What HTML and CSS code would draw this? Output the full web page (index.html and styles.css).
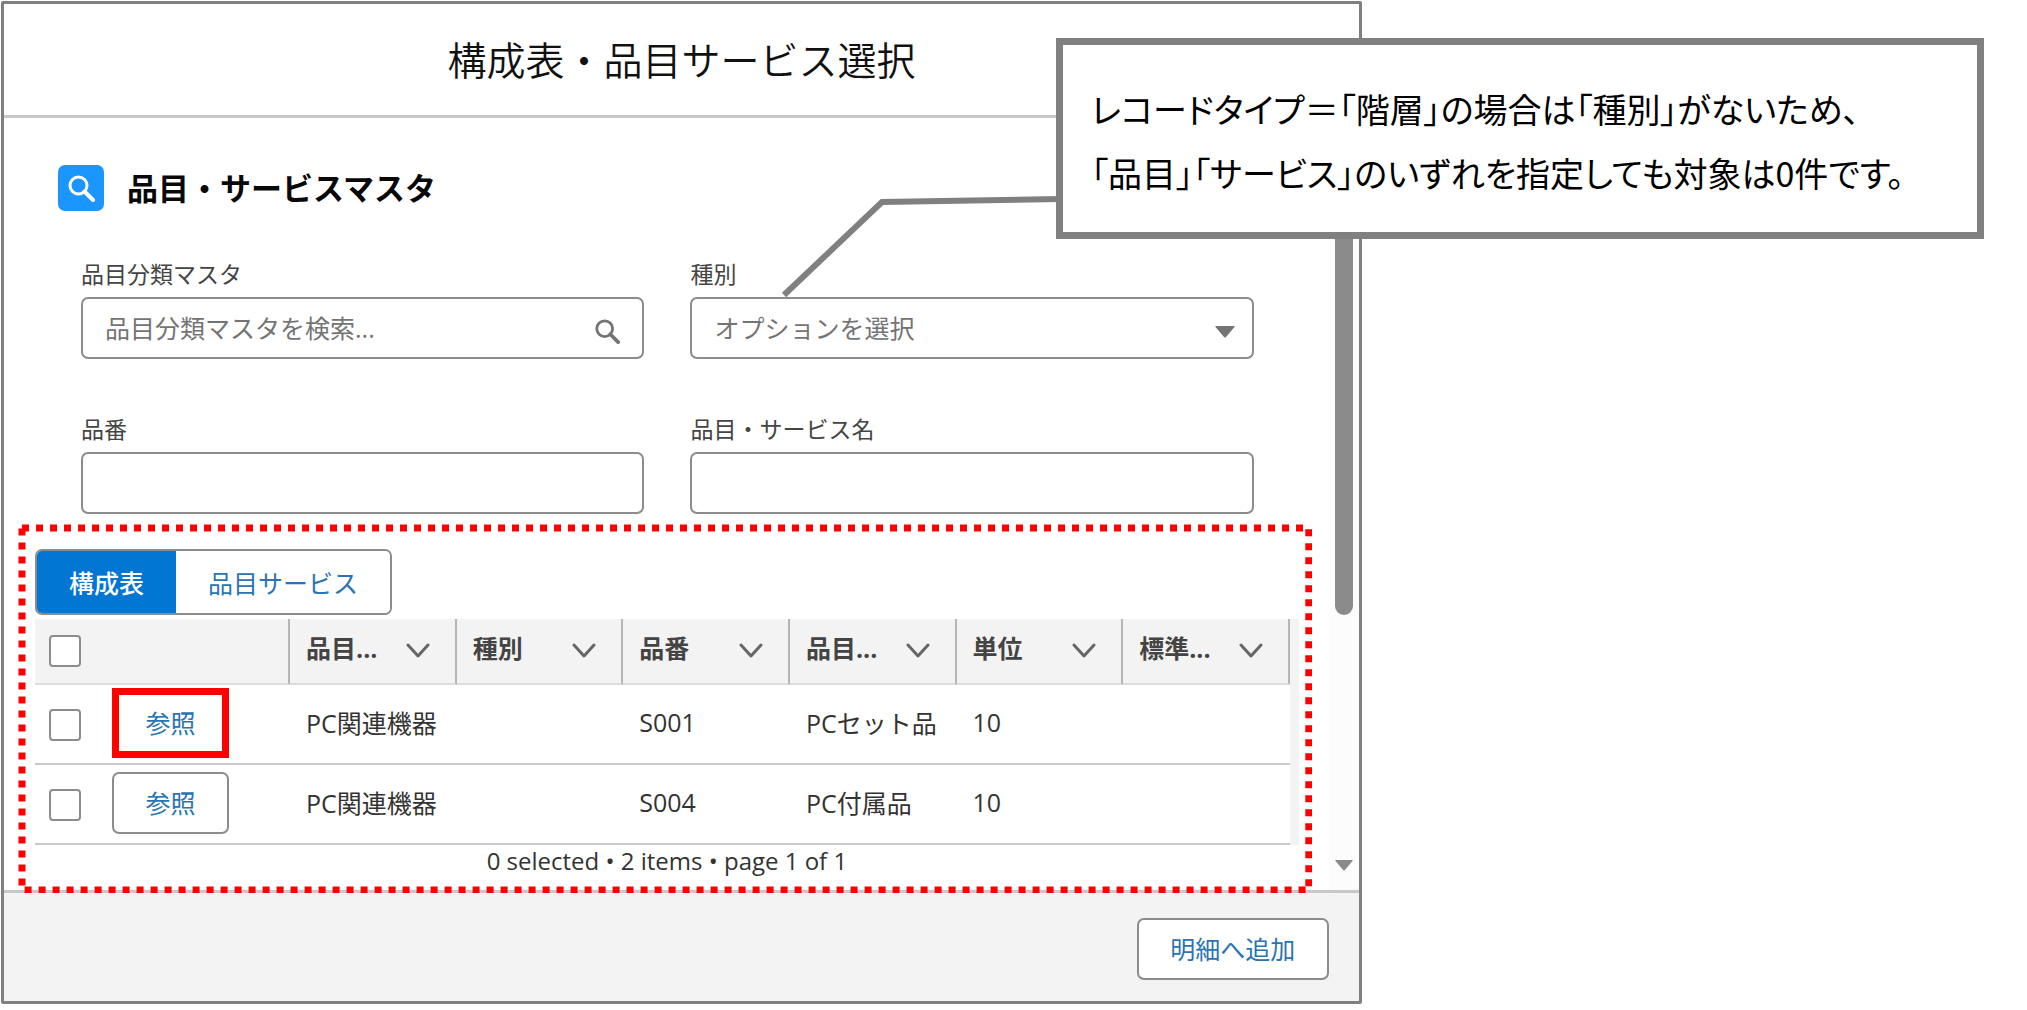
FILE: index.html
```html
<!DOCTYPE html>
<html lang="ja">
<head>
<meta charset="utf-8">
<title>構成表・品目サービス選択</title>
<link rel="stylesheet" href="styles.css">
</head>
<body>
<svg class="defs" aria-hidden="true">
  <symbol id="chevron" viewBox="0 0 24 16"><path d="M2 2 L12 13 L22 2" fill="none" stroke="currentColor" stroke-width="3" stroke-linecap="round" stroke-linejoin="round"/></symbol>
  <symbol id="search" viewBox="0 0 28 28"><circle cx="11.500" cy="11.500" r="8.500" fill="none" stroke="currentColor" stroke-width="3"/><path d="M17.500 17.500 L26 26" stroke="currentColor" stroke-width="4" stroke-linecap="round"/></symbol>
  <symbol id="down" viewBox="0 0 20 12"><path d="M1 0 H19 Q20 0 19.500 1 L11 11 Q10 12 9 11 L0.500 1 Q0 0 1 0 Z" fill="currentColor"/></symbol>
</svg>
<main class="page">
  <section class="modal" role="dialog" aria-labelledby="dialog-title">
    <header class="modal-header"><h1 id="dialog-title">構成表・品目サービス選択</h1></header>
    <div class="modal-body">
      <div class="content">
        <div class="heading">
          <span class="heading-icon"><svg><use href="#search"/></svg></span>
          <h2>品目・サービスマスタ</h2>
        </div>
        <form class="fields">
          <div class="field">
            <label for="category">品目分類マスタ</label>
            <div class="control">
              <input id="category" type="text" placeholder="品目分類マスタを検索...">
              <svg class="search-icon"><use href="#search"/></svg>
            </div>
          </div>
          <div class="field">
            <label for="kind">種別</label>
            <div class="control">
              <select id="kind"><option>オプションを選択</option></select>
              <svg class="down-icon"><use href="#down"/></svg>
            </div>
          </div>
          <div class="field">
            <label for="number">品番</label>
            <div class="control"><input id="number" type="text"></div>
          </div>
          <div class="field">
            <label for="name">品目・サービス名</label>
            <div class="control"><input id="name" type="text"></div>
          </div>
        </form>
        <div class="results">
          <svg class="dashes" aria-hidden="true"><rect/></svg>
          <div class="tabs">
            <button type="button" class="tab tab-active">構成表</button>
            <button type="button" class="tab">品目サービス</button>
          </div>
          <div class="table-wrap">
            <table>
              <colgroup><col class="col-check"><col class="col-action"><col><col><col><col><col><col></colgroup>
              <thead>
                <tr>
                  <th class="plain"><input type="checkbox" aria-label="すべて選択"></th>
                  <th></th>
                  <th><div class="th"><span>品目...</span><svg><use href="#chevron"/></svg></div></th>
                  <th><div class="th"><span>種別</span><svg><use href="#chevron"/></svg></div></th>
                  <th><div class="th"><span>品番</span><svg><use href="#chevron"/></svg></div></th>
                  <th><div class="th"><span>品目...</span><svg><use href="#chevron"/></svg></div></th>
                  <th><div class="th"><span>単位</span><svg><use href="#chevron"/></svg></div></th>
                  <th><div class="th"><span>標準...</span><svg><use href="#chevron"/></svg></div></th>
                </tr>
              </thead>
              <tbody>
                <tr>
                  <td><input type="checkbox" aria-label="S001を選択"></td>
                  <td class="action"><button type="button" class="button marked">参照</button></td>
                  <td>PC関連機器</td><td></td><td>S001</td><td>PCセット品</td><td>10</td><td></td>
                </tr>
                <tr>
                  <td><input type="checkbox" aria-label="S004を選択"></td>
                  <td class="action"><button type="button" class="button">参照</button></td>
                  <td>PC関連機器</td><td></td><td>S004</td><td>PC付属品</td><td>10</td><td></td>
                </tr>
              </tbody>
            </table>
          </div>
          <p class="status">0 selected • 2 items • page 1 of 1</p>
        </div>
      </div>
      <div class="scrollbar" aria-hidden="true">
        <div class="thumb"></div>
        <svg><use href="#down"/></svg>
      </div>
    </div>
    <footer class="modal-footer"><button type="button" class="button add">明細へ追加</button></footer>
  </section>
  <svg class="leader" viewBox="0 0 280 104" aria-hidden="true"><path d="M4 101 L102 8 L280 5" fill="none" stroke="#808080" stroke-width="6"/></svg>
  <aside class="callout">
    <p>レコードタイプ＝「階層」の場合は「種別」がないため、</p>
    <p>「品目」「サービス」のいずれを指定しても対象は0件です。</p>
  </aside>
</main>
</body>
</html>
```
FILE: styles.css
```css
* { box-sizing: border-box; }
body {
  margin: 0;
  background: #fff;
  color: #333;
  font-family: "Open Sans", "Noto Sans CJK JP", sans-serif;
  font-size: 25px;
}
h1, h2, p { margin: 0; }
button, input, select { font: inherit; }
svg { display: block; }
.defs { position: absolute; width: 0; height: 0; }
.page { position: relative; padding: 1px; }
.modal {
  width: 67.2%;
  border: 3px solid #808080;
  border-radius: 2px;
}
.modal-header {
  padding: 30px 0 29px;
  border-bottom: 3px solid #c8c8c8;
  text-align: center;
}
h1 {
  color: #111;
  font-size: 39px;
  font-weight: 350;
  line-height: 52px;
}
.modal-body { display: flex; }
.content { flex: 1; min-width: 0; }
.heading {
  display: flex;
  align-items: center;
  gap: 23px;
  margin: 47px 0 48px 54px;
}
.heading-icon {
  display: grid;
  place-items: center;
  width: 46px;
  height: 46px;
  border-radius: 7px;
  background: #1b96ff;
  color: #fff;
}
.heading-icon svg { width: 28px; height: 28px; }
h2 {
  color: #080808;
  font-size: 31px;
  font-weight: 700;
  line-height: 46px;
}
.fields {
  display: grid;
  grid-template-columns: 1fr 1fr;
  gap: 55px 46px;
  margin: 0 75px 0 77px;
}
label {
  display: block;
  margin-bottom: 8px;
  color: #444;
  font-size: 23px;
  line-height: 30px;
}
.control { position: relative; }
.control input, .control select {
  display: block;
  width: 100%;
  height: 62px;
  padding: 0 22px;
  border: 2px solid #8c8c8c;
  border-radius: 7px;
  background: #fff;
  color: #747474;
  appearance: none;
}
.control input::placeholder { color: #747474; opacity: 1; }
.search-icon, .down-icon { position: absolute; color: #747474; pointer-events: none; }
.search-icon { top: 21px; right: 24px; width: 26px; height: 26px; }
.down-icon { top: 29px; right: 19px; width: 20px; height: 12px; }
.results {
  position: relative;
  margin: 10px 17px -3px 14px;
  padding: 25px 13px 16px 17px;
}
.dashes { position: absolute; inset: 0; width: 100%; height: 100%; pointer-events: none; }
.dashes rect {
  x: 4px;
  y: 4px;
  width: calc(100% - 7px);
  height: calc(100% - 7px);
  fill: none;
  stroke: #f00;
  stroke-width: 7px;
  stroke-dasharray: 7 7;
}
.tabs {
  display: inline-flex;
  overflow: hidden;
  height: 66px;
  border: 2px solid #8c8c8c;
  border-radius: 7px;
  vertical-align: top;
}
.tab {
  padding: 0 32px;
  border: 0;
  background: #fff;
  color: #2a74b2;
}
.tab-active { background: #0176d3; color: #fff; font-weight: 500; }
.table-wrap { margin-top: 4px; padding-right: 9px; background: #f3f3f3; }
table {
  width: 100%;
  border-spacing: 0;
  table-layout: fixed;
}
.col-check { width: 77px; }
.col-action { width: 178px; }
th, td { text-align: left; white-space: nowrap; }
th {
  height: 66px;
  padding: 0 0 0 16px;
  border-right: 2px solid #b5b5b5;
  border-bottom: 2px solid #dcdcdc;
  background: #f3f3f3;
  color: #444;
}
th.plain { padding-left: 14px; border-right: 0; }
td { height: 80px; padding: 0 0 4px 16px; border-bottom: 2px solid #c9c9c9; background: #fff; }
td:first-child { padding: 2px 0 0 14px; }
td.action { padding: 0 0 2px; }
.th {
  display: flex;
  align-items: center;
  justify-content: space-between;
  padding-right: 25px;
  line-height: 44px;
}
.th span { padding-bottom: 6px; }
.th svg { width: 24px; height: 16px; color: #666; }
td input, th input {
  display: block;
  width: 32px;
  height: 32px;
  margin: 0;
  border: 2px solid #8c8c8c;
  border-radius: 4px;
  background: #fff;
  appearance: none;
}
.button {
  position: relative;
  display: block;
  width: 117px;
  height: 62px;
  padding: 0 0 2px;
  border: 2px solid #8c8c8c;
  border-radius: 7px;
  background: #fff;
  color: #2a74b2;
}
.marked::after {
  position: absolute;
  inset: -6px -2px;
  border: 7px solid #f00;
  content: "";
}
.status { font-size: 24px; line-height: 32px; text-align: center; }
.scrollbar {
  display: flex;
  flex-direction: column;
  align-items: center;
  justify-content: space-between;
  width: 30px;
  padding: 31px 0 19px;
  background: #fcfcfc;
  color: #8b8b8b;
}
.thumb { width: 18px; height: 466px; border-radius: 9px; background: #8b8b8b; }
.scrollbar svg { width: 18px; height: 11px; }
.modal-footer {
  display: flex;
  justify-content: flex-end;
  padding: 25px 30px 21px;
  border-top: 3px solid #c8c8c8;
  background: #f3f3f3;
}
.add { width: 192px; }
.leader { position: absolute; top: 194px; left: 780px; width: 280px; height: 104px; }
.callout {
  position: absolute;
  top: 38px;
  right: 43px;
  left: 52.1%;
  padding: 32px 28px 27px;
  border: 7px solid #808080;
  background: #fff;
  color: #000;
  font-family: "Noto Sans CJK JP", sans-serif;
  font-feature-settings: "palt";
  font-size: 34px;
  line-height: 64px;
  white-space: nowrap;
}
```
